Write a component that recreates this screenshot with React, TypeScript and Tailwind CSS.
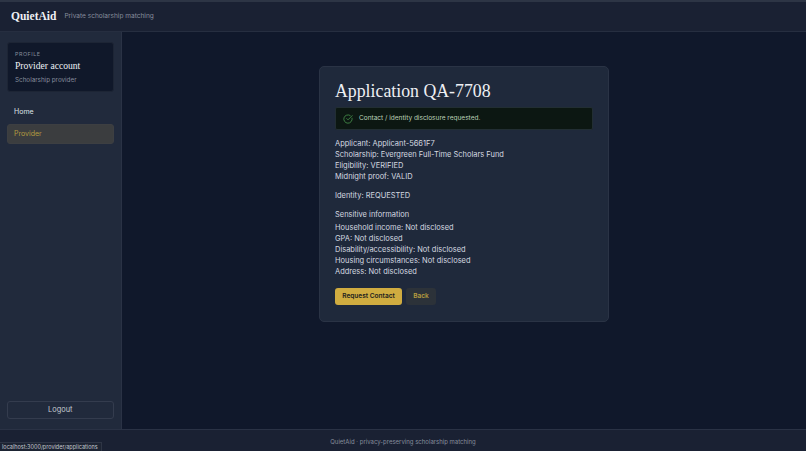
import { CircleCheckBig } from "lucide-react";

const serif = "font-['Liberation_Serif',serif]";

function Field({ children }: { children: string }) {
  return <p className="h-[11.1px] leading-[11.1px]">{children}</p>;
}

export default function App() {
  return (
    <div className="relative flex h-[451px] w-[806px] flex-col overflow-hidden bg-[#10182b] font-['Inter',sans-serif] text-[#d5d9e0]">
      <div className="h-[2px] bg-[#2d3545]" />
      <header className="flex h-[30px] items-center gap-[8px] border-b border-[#262e40] bg-[#1a2133] pl-[11px]">
        <span className={`${serif} text-[11.5px] font-bold text-[#eef0f4]`}>QuietAid</span>
        <span className="text-[6.55px] text-[#868d9c]">Private scholarship matching</span>
      </header>

      <div className="flex min-h-0 flex-1">
        <aside className="flex w-[122px] flex-col border-r border-[#2a3245] bg-[#212a3c] pr-[7.5px] pl-[7px] pt-[9.5px] pb-[10px]">
          <div className="h-[50.5px] rounded-[3px] border border-[#1d2535] bg-[#10182a] px-[7px] pt-[7px]">
            <p className="text-[5.4px] tracking-[0.5px] text-[#868d9c]">PROFILE</p>
            <p className={`${serif} mt-[1px] text-[9.6px] text-[#eef0f4]`}>Provider account</p>
            <p className="mt-[3px] text-[6.3px] text-[#868d9c]">Scholarship provider</p>
          </div>
          <nav className="mt-[11px] flex flex-col gap-[2px] text-[7px]">
            <a className="flex h-[19px] items-center px-[7px] text-[#dfe2e8]">Home</a>
            <a className="flex h-[19.5px] items-center rounded-[3px] border border-[#3d3f42] bg-[#3b3d3f] px-[6px] text-[#b49c3f]">Provider</a>
          </nav>
          <button className="mt-auto h-[18px] rounded-[3px] border border-[#343c4e] text-[7.4px] text-[#c3c7cf]">Logout</button>
        </aside>

        <main className="flex flex-1 items-start justify-center pt-[34px]">
          <section className="w-[290px] rounded-[5px] border border-[#2a3345] bg-[#1f293b] px-[15px] pt-[14px] pb-[16px] text-[7.47px]">
            <h1 className={`${serif} text-[17.8px] leading-[20px] text-[#eef0f4]`}>Application QA-7708</h1>
            <div className="mt-[6px] flex h-[23px] items-center gap-[6px] rounded-[2px] border border-[#222e33] bg-[#0c1712] px-[7px] text-[6.53px] text-[#bcd2b8]">
              <CircleCheckBig className="size-[10px] text-[#56b05a]" strokeWidth={1.6} />
              <span className="pt-[1px]">Contact / identity disclosure requested.</span>
            </div>
            <div className="mt-[8px]">
              <Field>Applicant: Applicant-5661F7</Field>
              <Field>Scholarship: Evergreen Full-Time Scholars Fund</Field>
              <Field>Eligibility: VERIFIED</Field>
              <Field>Midnight proof: VALID</Field>
            </div>
            <div className="mt-[8px]">
              <Field>Identity: REQUESTED</Field>
            </div>
            <div className="mt-[8px]">
              <p className="mb-[1px] h-[11.1px] leading-[11.1px]">Sensitive information</p>
              <Field>Household income: Not disclosed</Field>
              <Field>GPA: Not disclosed</Field>
              <Field>Disability/accessibility: Not disclosed</Field>
              <Field>Housing circumstances: Not disclosed</Field>
              <Field>Address: Not disclosed</Field>
            </div>
            <div className="mt-[11px] flex gap-[4px] text-[6.55px] font-semibold">
              <button className="h-[17px] w-[67px] rounded-[3px] bg-[#d0ac40] text-[#1c1d1e]">Request Contact</button>
              <button className="h-[17px] w-[30px] rounded-[3px] bg-[#2c3239] text-[#b49c3f]">Back</button>
            </div>
          </section>
        </main>
      </div>

      <footer className="flex h-[22px] items-center justify-center border-t border-[#2a3245] bg-[#1a2133] pt-[1px] text-[6px] text-[#868d9c]">
        QuietAid · privacy-preserving scholarship matching
      </footer>
      <div className="absolute bottom-0 left-0 flex h-[9px] w-[102px] items-center border-t border-r border-[#2e3545] bg-[#1d2433] pl-[2px] text-[5.5px] text-[#c3c7cf]">
        localhost:3000/provider/applications
      </div>
    </div>
  );
}
